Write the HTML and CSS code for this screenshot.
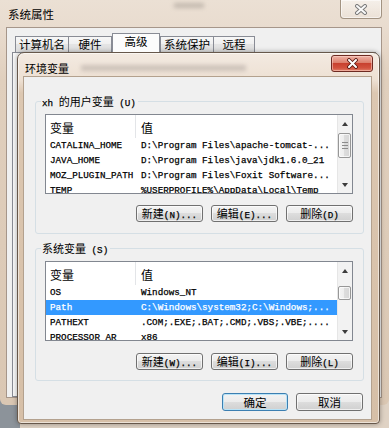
FILE: index.html
```html
<!DOCTYPE html>
<html>
<head>
<meta charset="utf-8">
<title>环境变量</title>
<link rel="stylesheet" href="styles.css">
</head>
<body>
<div class="desktop">
  <div class="sys-window">
    <div class="sys-title">
      <span class="sys-title-text">系统属性</span>
      <span class="glass-blur sys-blur"></span>
      <button class="sys-close" aria-label="关闭">
        <svg width="14" height="11" viewBox="0 0 14 11"><path d="M3 2 L11 9 M11 2 L3 9" stroke="#7a7a7a" stroke-width="4" stroke-linecap="round" fill="none"/><path d="M3 2 L11 9 M11 2 L3 9" stroke="#fafafa" stroke-width="2" stroke-linecap="round" fill="none"/></svg>
      </button>
    </div>
    <div class="sys-client">
      <div class="tabs">
        <div class="tab tab-1">计算机名</div>
        <div class="tab tab-2">硬件</div>
        <div class="tab tab-sel">高级</div>
        <div class="tab tab-4">系统保护</div>
        <div class="tab tab-5">远程</div>
      </div>
      <div class="tab-page"></div>
    </div>
  </div>

  <div class="env-dialog">
    <div class="env-title">
      <span class="env-title-text">环境变量</span>
      <span class="glass-blur env-blur"></span>
      <button class="env-close" aria-label="关闭">
        <svg width="13" height="11" viewBox="0 0 13 11"><path d="M3 2 L10 9 M10 2 L3 9" stroke="#5a1a12" stroke-width="3.8" stroke-linecap="round" fill="none"/><path d="M3 2 L10 9 M10 2 L3 9" stroke="#ffffff" stroke-width="2" stroke-linecap="round" fill="none"/></svg>
      </button>
    </div>
    <div class="env-client">
      <section class="group">
        <div class="group-label"><span class="m">xh </span>的用户变量<span class="m"> (U)</span></div>
        <div class="list">
          <div class="list-body">
            <div class="list-head"><div class="col-name">变量</div><div class="col-val">值</div></div>
            <div class="row"><div class="col-name m">CATALINA_HOME</div><div class="col-val m">D:\Program Files\apache-tomcat-...</div></div>
            <div class="row"><div class="col-name m">JAVA_HOME</div><div class="col-val m">D:\Program Files\java\jdk1.6.0_21</div></div>
            <div class="row"><div class="col-name m">MOZ_PLUGIN_PATH</div><div class="col-val m">D:\Program Files\Foxit Software...</div></div>
            <div class="row"><div class="col-name m">TEMP</div><div class="col-val m">%USERPROFILE%\AppData\Local\Temp</div></div>
          </div>
          <div class="scrollbar">
            <div class="arrow arrow-up"></div>
            <div class="thumb thumb-user"><span class="grip"></span></div>
            <div class="track"></div>
            <div class="arrow arrow-down"></div>
          </div>
        </div>
        <div class="btn-row">
          <button class="btn">新建<span class="m">(N)...</span></button>
          <button class="btn">编辑<span class="m">(E)...</span></button>
          <button class="btn">删除<span class="m">(D)</span></button>
        </div>
      </section>

      <section class="group group-sys">
        <div class="group-label">系统变量<span class="m"> (S)</span></div>
        <div class="list">
          <div class="list-body">
            <div class="list-head"><div class="col-name">变量</div><div class="col-val">值</div></div>
            <div class="row"><div class="col-name m">OS</div><div class="col-val m">Windows_NT</div></div>
            <div class="row selected"><div class="col-name m">Path</div><div class="col-val m">C:\Windows\system32;C:\Windows;...</div></div>
            <div class="row"><div class="col-name m">PATHEXT</div><div class="col-val m">.COM;.EXE;.BAT;.CMD;.VBS;.VBE;....</div></div>
            <div class="row"><div class="col-name m">PROCESSOR_AR</div><div class="col-val m">x86</div></div>
          </div>
          <div class="scrollbar">
            <div class="arrow arrow-up"></div>
            <div class="thumb thumb-sys"></div>
            <div class="track"></div>
            <div class="arrow arrow-down"></div>
          </div>
        </div>
        <div class="btn-row">
          <button class="btn">新建<span class="m">(W)...</span></button>
          <button class="btn">编辑<span class="m">(I)...</span></button>
          <button class="btn">删除<span class="m">(L)</span></button>
        </div>
      </section>

      <div class="dlg-buttons">
        <button class="btn btn-default">确定</button>
        <button class="btn">取消</button>
      </div>
    </div>
  </div>
</div>
</body>
</html>
```

FILE: styles.css
```css
html, body {
  margin: 0;
  padding: 0;
}

body {
  width: 389px;
  height: 428px;
  overflow: hidden;
  font-family: "Noto Sans CJK SC", sans-serif;
  font-size: 11px;
  color: #000;
}

.m {
  font-family: "Liberation Mono", "Noto Sans CJK SC", monospace;
  font-size: 9.25px;
  -webkit-text-stroke: 0.25px currentColor;
}

button {
  font-family: "Noto Sans CJK SC", sans-serif;
  font-size: 11px;
  color: #000;
  padding: 0;
  margin: 0;
}

.desktop {
  position: relative;
  width: 389px;
  height: 428px;
  overflow: hidden;
  background: linear-gradient(to right, #8c939a 0, #8c939a 20px, #dfd2c4 20px);
}

/* ---------- outer window: 系统属性 ---------- */
.sys-window {
  height: 405px;
  box-sizing: border-box;
  padding: 0 7px 7px 6px;
  display: flex;
  flex-direction: column;
  border-radius: 0 0 6px 6px;
  background: linear-gradient(#ebe0d4 0, #e9dccf 27px, #e0cfbd 80px, #dac7b3 100%);
}

.sys-title {
  height: 27px;
  display: flex;
  align-items: flex-start;
}

.sys-title-text {
  margin: 7px 0 0 2px;
  line-height: 14px;
  font-size: 11.5px;
}

.glass-blur {
  display: block;
  filter: blur(2px);
}

.sys-blur {
  width: 30px;
  height: 5px;
  margin: 3px 0 0 120px;
  background: #a49b92;
  opacity: 0.55;
}

.sys-close {
  margin-left: auto;
  width: 42px;
  height: 19px;
  box-sizing: border-box;
  border: 1px solid #a29382;
  border-top: none;
  border-radius: 0 0 4px 4px;
  background: linear-gradient(rgba(255, 255, 255, 0.5), rgba(240, 232, 224, 0.35));
  box-shadow: inset 0 0 0 1px rgba(255, 255, 255, 0.55);
  display: flex;
  align-items: center;
  justify-content: center;
}

.sys-client {
  flex: 1;
  background: #f0f0f0;
  border: 1px solid #a6968a;
  padding: 5px 5px 0 5px;
  display: flex;
  flex-direction: column;
}

.tabs {
  display: flex;
  align-items: flex-end;
  height: 19px;
  padding-left: 3px;
}

.tab {
  height: 16px;
  box-sizing: border-box;
  border: 1px solid #898c95;
  border-bottom: none;
  background: linear-gradient(#f7f7f7, #efefef 50%, #e4e4e4 50%, #dedede);
  line-height: 15px;
  text-align: center;
  font-size: 11.5px;
}

.tab-1 { width: 54px; margin-right: -1px; }
.tab-2 { width: 44px; }
.tab-sel {
  width: 48px;
  height: 19px;
  line-height: 15px;
  background: #fcfcfc;
  position: relative;
  z-index: 1;
}
.tab-4 { width: 54px; margin-right: -1px; }
.tab-5 { width: 42px; }

.tab-page {
  flex: 1;
  border: 1px solid #898c95;
  background: #f9f9f9;
}

/* ---------- inner dialog: 环境变量 ---------- */
.env-dialog {
  position: absolute;
  left: 17px;
  top: 52px;
  width: 363px;
  height: 372px;
  box-sizing: border-box;
  border: 1px solid #67584b;
  border-radius: 7px 7px 4px 4px;
  padding: 0 7px 3px 5px;
  display: flex;
  flex-direction: column;
  background: linear-gradient(#f3eae1 0, #ede0d3 27px, #dcc7b1 40px, #d6bfa7 100%);
  box-shadow: inset 0 0 0 1px rgba(255, 255, 255, 0.55), 0 0 5px rgba(0, 0, 0, 0.35);
}

.env-title {
  height: 27px;
  display: flex;
  align-items: flex-start;
}

.env-title-text {
  margin: 8px 0 0 2px;
  line-height: 14px;
}

.env-blur {
  width: 165px;
  height: 6px;
  margin: 12px 0 0 12px;
  background: #8e8480;
  opacity: 0.35;
}

.env-close {
  margin: 2px -1px 0 auto;
  width: 42px;
  height: 17px;
  box-sizing: border-box;
  border: 1px solid #6e2a22;
  border-radius: 3px;
  background: linear-gradient(#eeb3a6 0, #dc7f6c 45%, #c8412f 50%, #d2523e 80%, #e0806a 100%);
  box-shadow: inset 0 0 0 1px rgba(255, 220, 210, 0.5);
  display: flex;
  align-items: center;
  justify-content: center;
}

.env-client {
  flex: 1;
  background: #f0f0f0;
  border: 1px solid #b3a18e;
  padding: 24px 7px 8px 11px;
  display: flex;
  flex-direction: column;
}

.group {
  border: 1px solid #d5dfe5;
  border-radius: 3px;
  padding: 0 10px 11px 9px;
  display: flex;
  flex-direction: column;
}

.group-sys {
  margin-top: 14px;
  padding-bottom: 10px;
}

.group-label {
  align-self: flex-start;
  margin: -7px 0 4px -4px;
  padding: 0 2px 0 1px;
  background: #f0f0f0;
  line-height: 13px;
}

.list {
  height: 80px;
  box-sizing: border-box;
  border: 1px solid #828790;
  background: #fff;
  display: flex;
}

.list-body {
  flex: 1;
  overflow: hidden;
}

.list-head {
  height: 23px;
  display: flex;
  align-items: stretch;
  font-size: 12px;
}

.list-head .col-name,
.list-head .col-val {
  line-height: 25px;
}

.list-head .col-name {
  border-right: 1px solid #e3e5e8;
  width: 85px;
}

.row {
  height: 15px;
  display: flex;
  line-height: 15px;
  color: #000;
}

.col-name {
  width: 86px;
  padding-left: 4px;
  white-space: nowrap;
  overflow: hidden;
}

.col-val {
  flex: 1;
  padding-left: 5px;
  white-space: nowrap;
  overflow: hidden;
}

.row.selected {
  background: #3399ff;
  color: #fff;
}

.scrollbar {
  width: 15px;
  background: #f2f2f2;
  border-left: 1px solid #e6e6e6;
  box-sizing: border-box;
  display: flex;
  flex-direction: column;
}

.arrow {
  height: 17px;
  display: flex;
  align-items: center;
  justify-content: center;
}

.arrow::before {
  content: "";
  width: 0;
  height: 0;
  border-left: 3.5px solid transparent;
  border-right: 3.5px solid transparent;
}

.arrow-up::before {
  border-bottom: 4px solid #3c3c3c;
}

.arrow-down::before {
  border-top: 4px solid #3c3c3c;
}

.thumb {
  margin: 0 1px 0 0;
  box-sizing: border-box;
  border: 1px solid #979797;
  border-radius: 2px;
  background: linear-gradient(to right, #f4f4f4, #ececec 50%, #dcdcdc 50%, #d6d6d6);
  box-shadow: inset 0 0 0 1px rgba(255, 255, 255, 0.7);
  display: flex;
  align-items: center;
  justify-content: center;
}

.thumb-user {
  height: 25px;
  margin-top: 1px;
}

.thumb-sys {
  height: 14px;
  margin-top: 7px;
}

.grip {
  width: 6px;
  height: 7px;
  background: repeating-linear-gradient(#8c8c8c 0, #8c8c8c 1px, transparent 1px, transparent 3px);
}

.track {
  flex: 1;
}

.btn-row {
  display: flex;
  justify-content: flex-end;
  gap: 8px;
  margin-top: 11px;
}

.group-sys .btn-row {
  margin-top: 12px;
}

.btn {
  width: 67px;
  height: 17px;
  box-sizing: border-box;
  border: 1px solid #707070;
  border-radius: 3px;
  background: linear-gradient(#f3f3f3 0, #ebebeb 50%, #dddddd 50%, #d0d0d0 100%);
  box-shadow: inset 0 0 0 1px rgba(255, 255, 255, 0.65);
  line-height: 14px;
  white-space: nowrap;
  text-align: center;
}

.dlg-buttons {
  display: flex;
  justify-content: flex-end;
  gap: 8px;
  margin: 12px 1px 0 0;
}

.dlg-buttons .btn {
  height: 18px;
  line-height: 15px;
  font-size: 11.5px;
}

.btn-default {
  width: 66px;
  border-color: #3c7fb1;
  box-shadow: inset 0 0 0 1px #b9e3f7;
}
```
